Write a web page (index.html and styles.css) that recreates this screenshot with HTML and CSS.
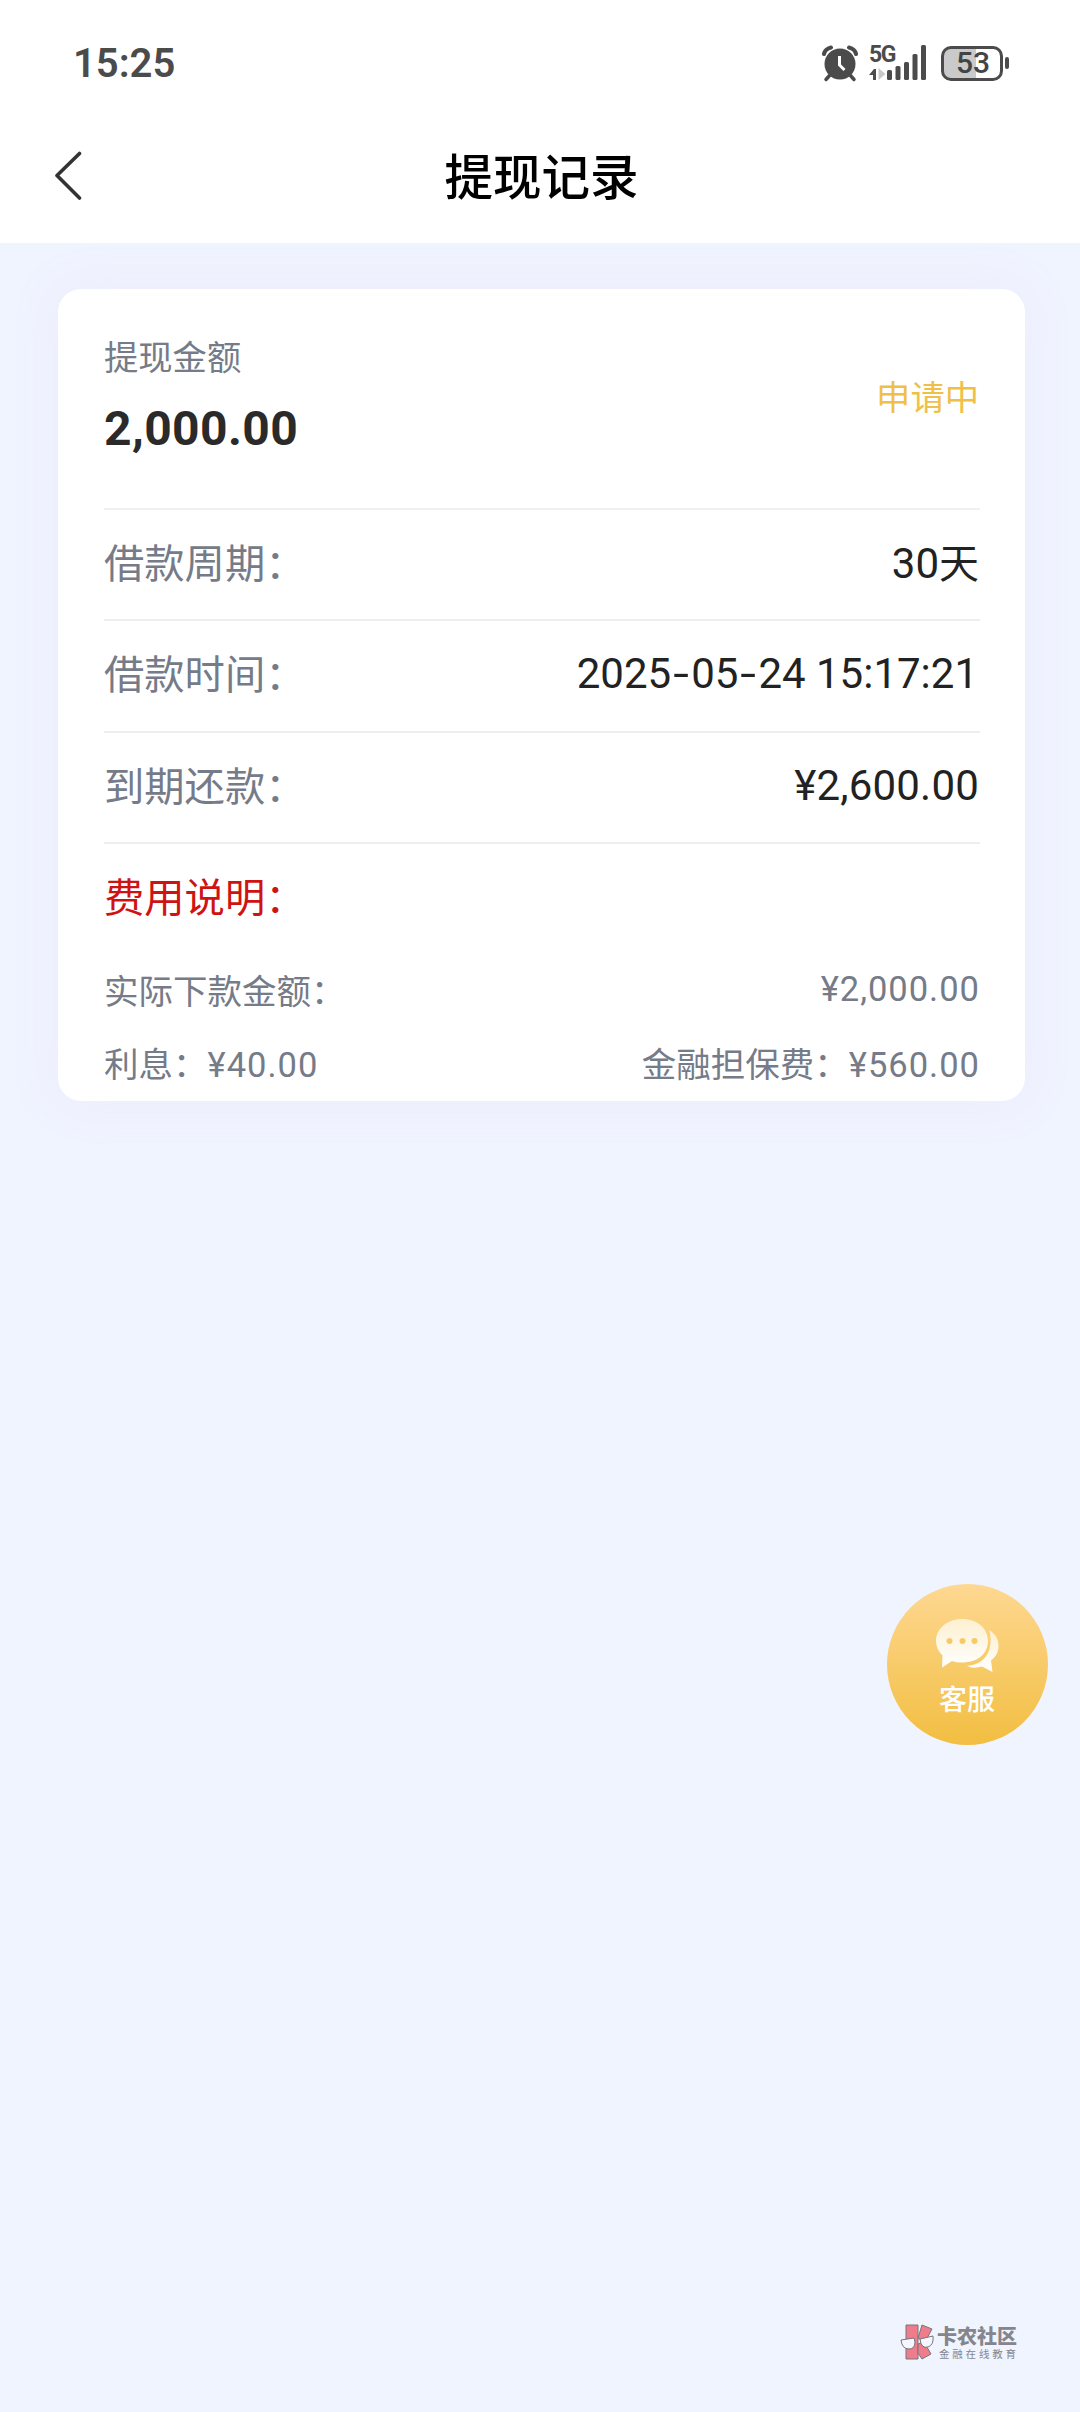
FILE: index.html
```html
<!DOCTYPE html>
<html lang="zh-CN">
<head>
<meta charset="utf-8">
<title>提现记录</title>
<link rel="stylesheet" href="styles.css">
</head>
<body>
<header class="header">
  <div class="status-bar">
    <span class="clock">15:25</span>
    <div class="status-icons">
      <svg class="alarm" width="36" height="37" viewBox="0 0 36 37">
        <g fill="none" stroke="#4b4b4b" stroke-linecap="round">
          <path d="M2 9Q3 4 9 2.5M34 9Q33 4 27 2.5" stroke-width="4"/>
          <path d="M8 30l-4 4.500M28 30l4 4.500" stroke-width="3.500"/>
        </g>
        <circle cx="18" cy="19" r="15.500" fill="#4b4b4b"/>
        <path d="M17.500 11v9l5 5" fill="none" stroke="#fff" stroke-width="3"/>
      </svg>
      <div class="network">
        <span class="network-type">5G</span>
        <svg width="58" height="36" viewBox="0 0 58 36">
          <g fill="#4b4b4b">
            <path d="M0 30l5-6h2v11H4v-5z"/>
            <rect x="18" y="25" width="5" height="10" rx="1.500"/>
            <rect x="26.500" y="21" width="5" height="14" rx="1.500"/>
            <rect x="35" y="17" width="5" height="18" rx="1.500"/>
            <rect x="43.500" y="9" width="5" height="26" rx="1.500"/>
            <rect x="52" y="0" width="5" height="35" rx="1.500"/>
          </g>
          <path d="M9.500 23v12l7-6z" fill="#c9c9c9"/>
        </svg>
      </div>
      <div class="battery"><span class="battery-level">53</span></div>
    </div>
  </div>
  <nav class="nav">
    <svg class="back" width="28" height="50" viewBox="0 0 28 50"><path d="M25.500 2.500L3 24.500l22.500 22.500" fill="none" stroke="#333" stroke-width="3.600" stroke-linecap="round" stroke-linejoin="round"/></svg>
    <h1 class="title">提现记录</h1>
  </nav>
</header>
<main class="content">
  <section class="card">
    <div class="summary">
      <div>
        <div class="summary-label">提现金额</div>
        <div class="amount">2,000.00</div>
      </div>
      <span class="state">申请中</span>
    </div>
    <div class="row"><span>借款周期：</span><span class="value">30<span class="cjk">天</span></span></div>
    <div class="row"><span>借款时间：</span><span class="value date">2025<i>-</i>05<i>-</i>24 15:17:21</span></div>
    <div class="row"><span>到期还款：</span><span class="value price">¥2,600.00</span></div>
    <div class="row fee-title"><span>费用说明：</span></div>
    <div class="fee"><span>实际下款金额：</span><span class="num">¥2,000.00</span></div>
    <div class="fee"><span>利息：<span class="num">¥40.00</span></span><span>金融担保费：<span class="num">¥560.00</span></span></div>
  </section>
</main>
<a class="service">
  <svg width="64" height="56" viewBox="0 0 64 56">
    <defs><linearGradient id="bubble" x1="0" y1="0" x2="0" y2="1"><stop offset="0" stop-color="#fdf0d0"/><stop offset="1" stop-color="#fff"/></linearGradient></defs>
    <path d="M54 12C61 16 64 22 63.500 30Q63 37 56 42.500L57.500 54L47 48.500Q38 51 32 48Q50 46 54.500 31Q57 20 54 12Z" fill="url(#bubble)"/>
    <path d="M27 1C43 1 53 11 53 23C53 36 42 44.500 27 44.500Q21 44.500 17 43L7 49.500L7.500 37.500Q1 31 1 23C1 11 12 1 27 1Z" fill="url(#bubble)"/>
    <g fill="#f6cb67"><circle cx="14.500" cy="23" r="3"/><circle cx="27.500" cy="23" r="3"/><circle cx="39.500" cy="23" r="3"/></g>
  </svg>
  <span>客服</span>
</a>
<div class="watermark">
  <svg width="34" height="36" viewBox="0 0 34 36">
    <g fill="#ee7c8a" stroke="#77757c" stroke-width="1" stroke-linejoin="round">
      <path d="M6 1h12v34H6z"/>
      <path d="M22 1l10 4-7 13-7-4z"/>
      <path d="M18 20l6-2 7 12-9 5-4-6z"/>
    </g>
    <g fill="#f4f7ff" stroke="#77757c" stroke-width="1"><path d="M1 16l13-2 1 4q0 7-6 7-7 0-8-9zM20 15l13-3q1 9-5 11-7 2-8-8z"/></g>
  </svg>
  <div class="brand"><span class="brand-name">卡农社区</span><span class="brand-tag">金融在线教育</span></div>
</div>
</body>
</html>
```
FILE: styles.css
```css
* { box-sizing: border-box; }
body { margin: 0; min-height: 2412px; position: relative; background: #f0f4ff; font-family: "Noto Sans CJK SC", sans-serif; color: #222; }
.header { height: 243px; background: #fff; }
.status-bar { height: 126px; padding: 0 69px 0 73px; display: flex; align-items: center; justify-content: space-between; }
.clock { font: 600 40px/1 Roboto, sans-serif; padding-top: 2px; color: #4b4b4b; }
.status-icons { display: flex; align-items: center; gap: 11px; }
.network { position: relative; display: flex; }
.network-type { position: absolute; left: 0; top: -2px; font: 700 23px/1 Roboto, sans-serif; letter-spacing: -1.5px; color: #4b4b4b; }
.battery { position: relative; width: 62px; height: 35px; margin: 0 8px 0 3px; border: 3px solid #4b4b4b; border-radius: 10px; background: linear-gradient(90deg, #cacaca 57%, #fff 57%); display: flex; align-items: center; justify-content: center; }
.battery::after { content: ""; position: absolute; right: -9px; top: 8px; width: 4px; height: 12px; border-radius: 2px; background: #4b4b4b; }
.battery-level { font: 500 30px/1 Roboto, sans-serif; color: #444; padding-left: 2px; }
.nav { height: 100px; display: flex; align-items: center; padding: 0 54px; }
.back { flex: none; }
.title { flex: 1; margin: 0 28px 4px 0; text-align: center; font-size: 48.500px; font-weight: 500; line-height: 1; color: #000; padding-left: 3px; }
.content { padding: 46px 55px 0 58px; }
.card { height: 812px; padding: 0 45px 0 46px; border-radius: 23px; background: #fff; box-shadow: 0 0 45px rgba(234, 235, 250, 0.9); }
.summary { height: 221px; border-bottom: 2px solid #f0f0f0; display: flex; justify-content: space-between; padding-top: 44px; }
.summary-label { font-size: 34.300px; line-height: 44px; color: #757b88; }
.amount { font: 700 48px/56px Roboto, sans-serif; letter-spacing: 0.4px; margin-top: 24px; color: #2a2a2a; }
.state { font-size: 34.300px; line-height: 44px; margin-top: 40px; padding-right: 1px; color: #f0c046; }
.row { height: 111.300px; border-bottom: 2px solid #eee; padding-bottom: 7px; display: flex; align-items: center; justify-content: space-between; font-size: 40.300px; line-height: 1; color: #757b88; }
.value { font-family: Roboto, "Noto Sans CJK SC", sans-serif; color: #222; font-size: 42px; padding: 4px 1px 0 0; }
.date { padding-right: 2px; }
.date i { display: inline-block; font-style: normal; width: 20px; text-align: center; transform: scaleX(1.35); }
.price { letter-spacing: 0.2px; }
.cjk { font-family: "Noto Sans CJK SC", sans-serif; font-size: 40px; }
.fee-title { border-bottom: 0; padding-bottom: 9px; color: #cf1313; }
.fee { height: 74px; padding-bottom: 5px; display: flex; align-items: center; justify-content: space-between; font-size: 34.500px; line-height: 1; color: #757b88; }
.num { font-family: Roboto, sans-serif; letter-spacing: 1px; }
.service { position: absolute; left: 887px; top: 1584px; width: 161px; height: 161px; border-radius: 50%; background: linear-gradient(#fed892, #f2be41); color: #fff; display: flex; flex-direction: column; align-items: center; padding: 34px 1px 0 0; gap: 10px; font-size: 28px; font-weight: 500; line-height: 1; }
.watermark { position: absolute; left: 900px; top: 2324px; display: flex; gap: 3px; color: #85858d; }
.brand { display: flex; flex-direction: column; }
.brand-name { font-size: 20px; line-height: 23px; font-weight: 900; }
.brand-tag { font-size: 10.500px; line-height: 13px; letter-spacing: 2.800px; padding-left: 2px; }
```
